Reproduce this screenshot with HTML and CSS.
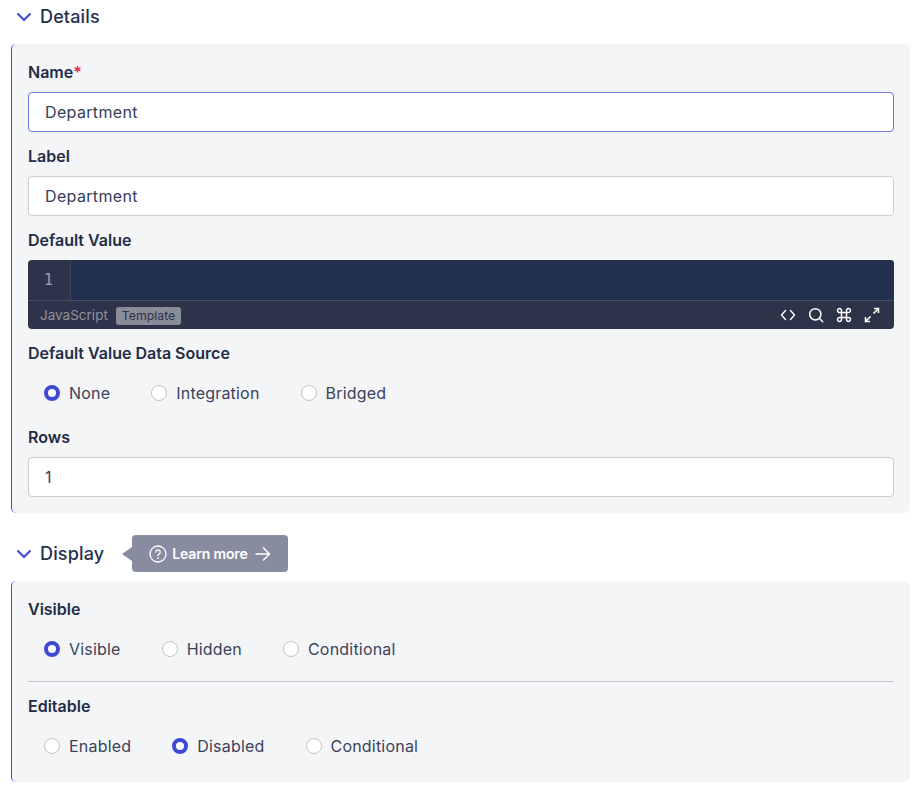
FILE: index.html
```html
<!DOCTYPE html>
<html lang="en">
<head>
<meta charset="utf-8">
<title>Details</title>
<link rel="stylesheet" href="styles.css">
</head>
<body>
<div class="page">
  <div class="sec-head sec-head-first">
    <svg class="chev" viewBox="0 0 16 10" width="16" height="10"><path d="M2 2l6 6 6-6" fill="none" stroke="#3f48d8" stroke-width="2" stroke-linecap="round" stroke-linejoin="round"/></svg>
    <span class="sec-title">Details</span>
  </div>
  <section class="panel">
    <div class="field-label">Name<span class="req">*</span></div>
    <input class="text-input focus" type="text" value="Department">
    <div class="field-label spaced">Label</div>
    <input class="text-input" type="text" value="Department">
    <div class="field-label spaced">Default Value</div>
    <div class="editor">
      <div class="editor-line">
        <div class="gutter">1</div>
        <div class="code"></div>
      </div>
      <div class="editor-bar">
        <span class="lang">JavaScript</span>
        <span class="tag">Template</span>
        <span class="tools">
          <svg viewBox="0 0 16 16" width="16" height="16"><path d="M5.5 3.5L1.5 8l4 4.5M10.5 3.5l4 4.5-4 4.5" fill="none" stroke="#fff" stroke-width="1.4" stroke-linecap="round" stroke-linejoin="round"/></svg>
          <svg viewBox="0 0 16 16" width="16" height="16"><circle cx="7.3" cy="7.3" r="5.6" fill="none" stroke="#fff" stroke-width="1.5"/><path d="M11.5 11.5l3.2 3.2" stroke="#fff" stroke-width="1.5" stroke-linecap="round"/></svg>
          <svg viewBox="0 0 16 16" width="16" height="16"><path d="M5.5 5.5h5v5h-5zM5.5 5.5H3.8a2 2 0 1 1 1.7-1.8zM10.500 5.500V3.800a2 2 0 1 1 1.800 1.700zM10.500 10.500h1.700a2 2 0 1 1-1.700 1.800zM5.500 10.500v1.700a2 2 0 1 1-1.800-1.700z" fill="none" stroke="#fff" stroke-width="1.5" stroke-linejoin="round"/></svg>
          <svg viewBox="0 0 16 16" width="16" height="16"><path d="M10 1.500h4.500V6M14.300 1.700L9.500 6.500M6 14.500H1.500V10M1.700 14.300l4.800-4.800" fill="none" stroke="#fff" stroke-width="1.600"/></svg>
        </span>
      </div>
    </div>
    <div class="field-label spaced">Default Value Data Source</div>
    <div class="radios">
      <label class="radio"><input type="radio" name="src" checked>None</label>
      <label class="radio"><input type="radio" name="src">Integration</label>
      <label class="radio"><input type="radio" name="src">Bridged</label>
    </div>
    <div class="field-label spaced">Rows</div>
    <input class="text-input" type="text" value="1">
  </section>

  <div class="sec-head sec-head-next">
    <svg class="chev" viewBox="0 0 16 10" width="16" height="10"><path d="M2 2l6 6 6-6" fill="none" stroke="#3f48d8" stroke-width="2" stroke-linecap="round" stroke-linejoin="round"/></svg>
    <span class="sec-title">Display</span>
    <a class="learn">
      <svg viewBox="0 0 18 18" width="18" height="18"><circle cx="9" cy="9" r="8" fill="none" stroke="#fff" stroke-width="1.300"/><path d="M6.800 7a2.200 2.200 0 1 1 3.400 1.900c-.8.500-1.200 1-1.200 1.800" fill="none" stroke="#fff" stroke-width="1.300" stroke-linecap="round"/><circle cx="9" cy="13.200" r=".9" fill="#fff"/></svg>
      <span>Learn more</span>
      <svg viewBox="0 0 16 14" width="16" height="14"><path d="M1 7h13.500M8.500 1l6 6-6 6" fill="none" stroke="#fff" stroke-width="1.500" stroke-linecap="round" stroke-linejoin="round"/></svg>
    </a>
  </div>
  <section class="panel">
    <div class="field-label">Visible</div>
    <div class="radios">
      <label class="radio"><input type="radio" name="vis" checked>Visible</label>
      <label class="radio"><input type="radio" name="vis">Hidden</label>
      <label class="radio"><input type="radio" name="vis">Conditional</label>
    </div>
    <hr class="divider">
    <div class="field-label">Editable</div>
    <div class="radios">
      <label class="radio"><input type="radio" name="edit">Enabled</label>
      <label class="radio"><input type="radio" name="edit" checked>Disabled</label>
      <label class="radio"><input type="radio" name="edit">Conditional</label>
    </div>
  </section>
</div>
</body>
</html>
```
FILE: styles.css
```css
* { box-sizing: border-box; }
html, body { margin: 0; padding: 0; background: #fff; }
body { font-family: Inter, "Liberation Sans", sans-serif; color: #2a3350; font-size: 16px; overflow: hidden; }
.page { padding: 0 13px 0 11px; }

.sec-head { display: flex; align-items: center; padding-left: 5px; }
.sec-head-first { height: 33px; margin-bottom: 11px; }
.sec-head-next { height: 37px; margin-top: 22px; margin-bottom: 9px; }
.chev { flex: none; margin-right: 8px; }
.sec-title { font-size: 18px; font-weight: 500; line-height: 24px; color: #263050; letter-spacing: 0.15px; }

.learn { position: relative; display: flex; align-items: center; height: 37px; width: 156px; margin-left: 28px; padding-left: 17px; background: #888ca0; border-radius: 4px; color: #fff; font-size: 14px; font-weight: 600; letter-spacing: -0.15px; }
.learn::before { content: ""; position: absolute; left: -10px; top: 12px; border-top: 7px solid transparent; border-bottom: 7px solid transparent; border-right: 10px solid #888ca0; }
.learn span { margin: 0 7px 0 5px; }

.panel { background: #f4f5f7; border-left: 1px solid #4f4ac8; border-radius: 5px; padding: 18px 16px 16px; }
.field-label { height: 20px; line-height: 20px; font-size: 16px; font-weight: 600; color: #232c47; }
.field-label.spaced { margin-top: 14px; }
.req { color: #e0294f; }

.text-input { display: block; width: 100%; height: 40px; margin-top: 10px; padding: 0 16px; background: #fff; border: 1px solid #ccc; border-radius: 4px; font: 400 16px Inter, "Liberation Sans", sans-serif; letter-spacing: 0.35px; color: #353d5a; outline: none; }
.text-input.focus { border-color: #6f78d8; }

.editor { margin-top: 10px; height: 69px; border-radius: 4px; overflow: hidden; background: #2d3348; }
.editor-line { display: flex; height: 41px; border-bottom: 1px solid #4a5068; }
.gutter { width: 43px; border-right: 1px solid #3d4560; font: 15px/40px "DejaVu Sans Mono", monospace; color: #9ca1ab; padding-left: 16px; }
.code { flex: 1; background: #232f4e; }
.editor-bar { display: flex; align-items: center; height: 28px; padding: 0 14px 0 12px; }
.lang { font-size: 13.5px; color: #8f93a0; }
.tag { margin-left: 8px; height: 18px; line-height: 18px; padding: 0 6px; background: #8a8c97; border-radius: 3px; font-size: 12.3px; color: #2d3348; position: relative; top: 1px; }
.tools { margin-left: auto; display: flex; gap: 12px; }
.tools svg { display: block; }

.radios { display: flex; align-items: center; gap: 41px; height: 40px; margin-top: 10px; padding-left: 16px; }
.radio { display: flex; align-items: center; gap: 9px; color: #3a425c; letter-spacing: 0.2px; }
.radio input { appearance: none; -webkit-appearance: none; flex: none; margin: 0; width: 16px; height: 16px; border-radius: 50%; border: 1px solid #c4c4c4; background: #fff; }
.radio input:checked { border: 4.5px solid #3f48d8; }

.divider { height: 1px; margin: 12px 0 14px; border: 0; background: #c4c5cf; }
```
